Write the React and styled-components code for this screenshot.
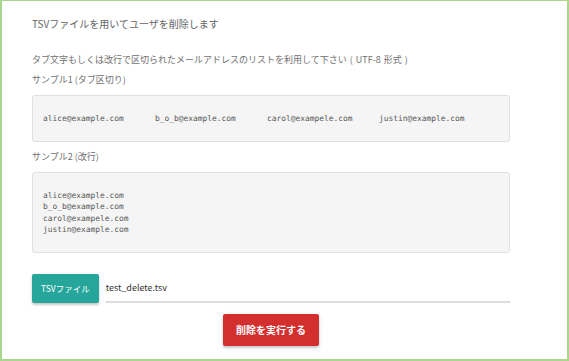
import React from "react";
import styled, { createGlobalStyle } from "styled-components";

const GlobalStyle = createGlobalStyle`
  html, body {
    margin: 0;
    padding: 0;
    background: #fff;
  }
  body {
    font-family: "Noto Sans CJK JP", "Noto Sans", sans-serif;
  }
`;

const tabSample = [
  "alice@example.com",
  "b_o_b@example.com",
  "carol@exampele.com",
  "justin@example.com",
];

const App = () => {
  return (
    <>
      <GlobalStyle />
      <S_Frame>
        <S_Title>TSVファイルを用いてユーザを削除します</S_Title>
        <S_Description>
          タブ文字もしくは改行で区切られたメールアドレスのリストを利用して下さい ( UTF-8 形式 )
        </S_Description>

        <S_Label>サンプル1 (タブ区切り)</S_Label>
        <S_Sample>{tabSample.join("\t")}</S_Sample>

        <S_Label $spaced>サンプル2 (改行)</S_Label>
        <S_Sample>{tabSample.join("\n")}</S_Sample>

        <S_FileRow>
          <S_FileButton>TSVファイル</S_FileButton>
          <S_FileName>test_delete.tsv</S_FileName>
        </S_FileRow>

        <S_Actions>
          <S_DeleteButton>削除を実行する</S_DeleteButton>
        </S_Actions>
      </S_Frame>
    </>
  );
};

export default App;

// styles

const S_Frame = styled.div`
  box-sizing: border-box;
  width: 569px;
  height: 361px;
  border: 2px solid #a9d78e;
  border-top-width: 1px;
  padding: 16px 57px 0 30px;
  display: flex;
  flex-direction: column;
  color: #707070;
`;

const S_Title = styled.div`
  font-size: 10px;
  line-height: 14px;
  color: #666;
`;

const S_Description = styled.div`
  margin-top: 22px;
  font-size: 9px;
  line-height: 14px;
  word-spacing: 1px;
`;

const S_Label = styled.div`
  margin-top: ${(p) => (p.$spaced ? "8px" : "6px")};
  font-size: 9px;
  line-height: 14px;
`;

const S_Sample = styled.pre`
  margin: 8px 0 0;
  padding: 17px 10px 16px;
  background: #f5f5f5;
  border: 1px solid #e0e0e0;
  border-radius: 3px;
  font-family: "DejaVu Sans Mono", "Liberation Mono", monospace;
  font-size: 7.9px;
  line-height: 11.6px;
  color: #555;
  tab-size: 112px;
  white-space: pre;
`;

const S_FileRow = styled.div`
  margin-top: 21px;
  display: flex;
  align-items: stretch;
  gap: 7px;
  height: 29px;
`;

const S_FileButton = styled.div`
  display: flex;
  align-items: center;
  padding: 0 9px;
  background: #26a69a;
  color: #fff;
  font-size: 8.5px;
  border-radius: 2px;
  box-shadow: 0 2px 2px rgba(0, 0, 0, 0.14), 0 1px 4px rgba(0, 0, 0, 0.12);
`;

const S_FileName = styled.div`
  flex: 1;
  display: flex;
  align-items: center;
  border-bottom: 2px solid #ddd;
  font-size: 9px;
  color: #333;
`;

const S_Actions = styled.div`
  margin-top: 11px;
  display: flex;
  justify-content: center;
`;

const S_DeleteButton = styled.div`
  display: flex;
  align-items: center;
  justify-content: center;
  height: 32px;
  padding: 0 13px;
  background: #d32f2f;
  color: #fff;
  font-size: 10px;
  font-weight: bold;
  border-radius: 2px;
  box-shadow: 0 2px 2px rgba(0, 0, 0, 0.14), 0 1px 5px rgba(0, 0, 0, 0.12);
`;
